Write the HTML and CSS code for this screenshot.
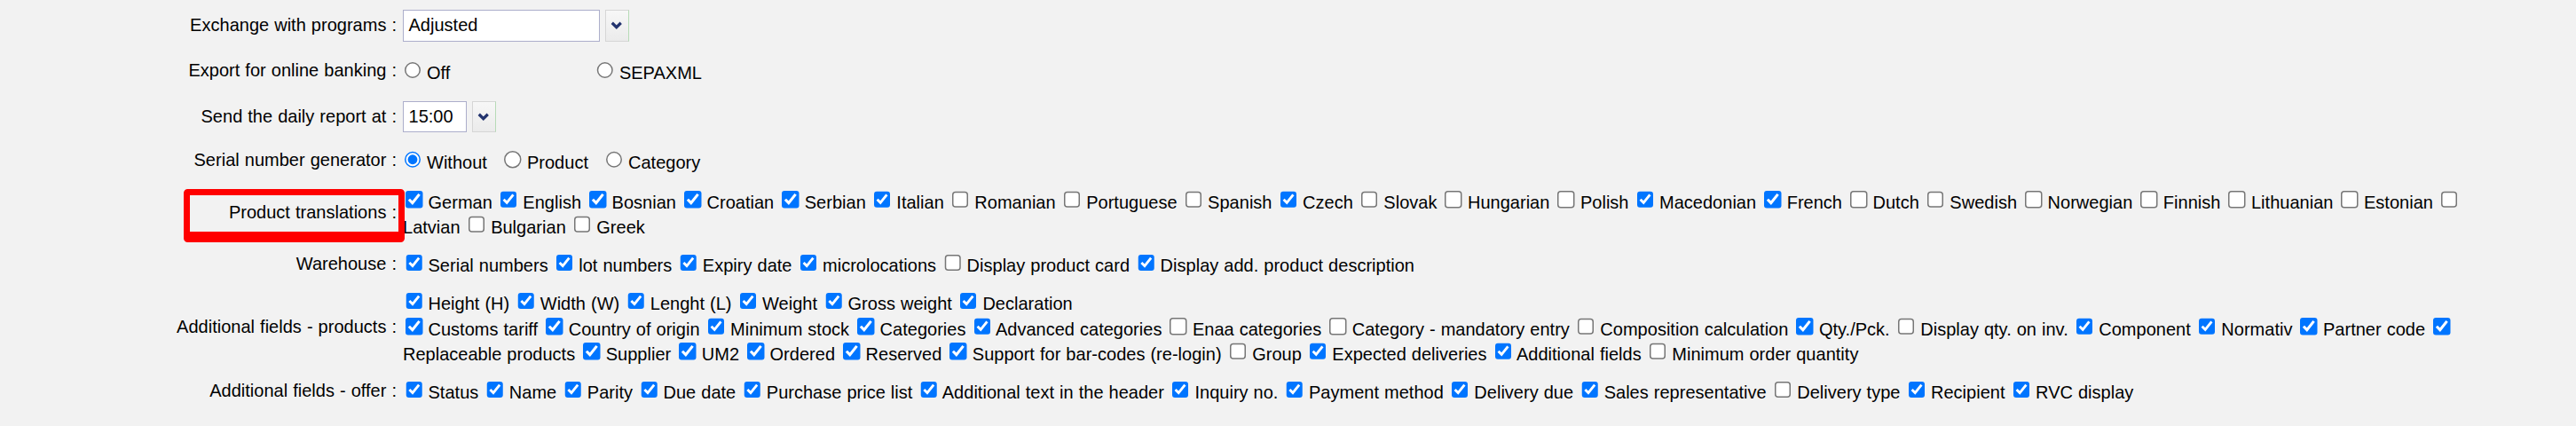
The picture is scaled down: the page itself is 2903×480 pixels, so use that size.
FILE: index.html
```html
<!DOCTYPE html>
<html>
<head>
<meta charset="utf-8">
<title>Settings</title>
<link rel="stylesheet" href="styles.css">
</head>
<body>
<div class="page">
  <table class="form">
    <tr class="r1">
      <td class="lbl">Exchange with programs :</td>
      <td class="val">
        <span class="combo"><span class="cbox wide">Adjusted</span><span class="cbtn"><svg class="chev" viewBox="0 0 10 7"><path d="M1.3 1.3 L5 5 L8.7 1.3"/></svg></span></span>
      </td>
    </tr>
    <tr class="r2">
      <td class="lbl">Export for online banking :</td>
      <td class="val"><label class="fixed"><input type="radio" name="bank"> Off</label> <label><input type="radio" name="bank"> SEPAXML</label></td>
    </tr>
    <tr class="r3">
      <td class="lbl">Send the daily report at :</td>
      <td class="val">
        <span class="combo"><span class="cbox narrow">15:00</span><span class="cbtn"><svg class="chev" viewBox="0 0 10 7"><path d="M1.3 1.3 L5 5 L8.7 1.3"/></svg></span></span>
      </td>
    </tr>
    <tr class="r4">
      <td class="lbl">Serial number generator :</td>
      <td class="val"><label class="ropt"><input type="radio" name="sn" checked> Without</label> <label class="ropt"><input type="radio" name="sn"> Product</label> <label><input type="radio" name="sn"> Category</label></td>
    </tr>
    <tr>
      <td class="lbl">Product translations :</td>
      <td class="val"><label><input type="checkbox" checked> German</label> <label><input type="checkbox" checked> English</label> <label><input type="checkbox" checked> Bosnian</label> <label><input type="checkbox" checked> Croatian</label> <label><input type="checkbox" checked> Serbian</label> <label><input type="checkbox" checked> Italian</label> <label><input type="checkbox"> Romanian</label> <label><input type="checkbox"> Portuguese</label> <label><input type="checkbox"> Spanish</label> <label><input type="checkbox" checked> Czech</label> <label><input type="checkbox"> Slovak</label> <label><input type="checkbox"> Hungarian</label> <label><input type="checkbox"> Polish</label> <label><input type="checkbox" checked> Macedonian</label> <label><input type="checkbox" checked> French</label> <label><input type="checkbox"> Dutch</label> <label><input type="checkbox"> Swedish</label> <label><input type="checkbox"> Norwegian</label> <label><input type="checkbox"> Finnish</label> <label><input type="checkbox"> Lithuanian</label> <label><input type="checkbox"> Estonian</label> <label><input type="checkbox"> Latvian</label> <label><input type="checkbox"> Bulgarian</label> <label><input type="checkbox"> Greek</label></td>
    </tr>
    <tr>
      <td class="lbl">Warehouse :</td>
      <td class="val"><label><input type="checkbox" checked> Serial numbers</label> <label><input type="checkbox" checked> lot numbers</label> <label><input type="checkbox" checked> Expiry date</label> <label><input type="checkbox" checked> microlocations</label> <label><input type="checkbox"> Display product card</label> <label><input type="checkbox" checked> Display add. product description</label></td>
    </tr>
    <tr>
      <td class="lbl">Additional fields - products :</td>
      <td class="val"><label><input type="checkbox" checked> Height (H)</label> <label><input type="checkbox" checked> Width (W)</label> <label><input type="checkbox" checked> Lenght (L)</label> <label><input type="checkbox" checked> Weight</label> <label><input type="checkbox" checked> Gross weight</label> <label><input type="checkbox" checked> Declaration</label><br><label><input type="checkbox" checked> Customs tariff</label> <label><input type="checkbox" checked> Country of origin</label> <label><input type="checkbox" checked> Minimum stock</label> <label><input type="checkbox" checked> Categories</label> <label><input type="checkbox" checked> Advanced categories</label> <label><input type="checkbox"> Enaa categories</label> <label><input type="checkbox"> Category - mandatory entry</label> <label><input type="checkbox"> Composition calculation</label> <label><input type="checkbox" checked> Qty./Pck.</label> <label><input type="checkbox"> Display qty. on inv.</label> <label><input type="checkbox" checked> Component</label> <label><input type="checkbox" checked> Normativ</label> <label><input type="checkbox" checked> Partner code</label> <label><input type="checkbox" checked> Replaceable products</label> <label><input type="checkbox" checked> Supplier</label> <label><input type="checkbox" checked> UM2</label> <label><input type="checkbox" checked> Ordered</label> <label><input type="checkbox" checked> Reserved</label> <label><input type="checkbox" checked> Support for bar-codes (re-login)</label> <label><input type="checkbox"> Group</label> <label><input type="checkbox" checked> Expected deliveries</label> <label><input type="checkbox" checked> Additional fields</label> <label><input type="checkbox"> Minimum order quantity</label></td>
    </tr>
    <tr>
      <td class="lbl">Additional fields - offer :</td>
      <td class="val"><label><input type="checkbox" checked> Status</label> <label><input type="checkbox" checked> Name</label> <label><input type="checkbox" checked> Parity</label> <label><input type="checkbox" checked> Due date</label> <label><input type="checkbox" checked> Purchase price list</label> <label><input type="checkbox" checked> Additional text in the header</label> <label><input type="checkbox" checked> Inquiry no.</label> <label><input type="checkbox" checked> Payment method</label> <label><input type="checkbox" checked> Delivery due</label> <label><input type="checkbox" checked> Sales representative</label> <label><input type="checkbox"> Delivery type</label> <label><input type="checkbox" checked> Recipient</label> <label><input type="checkbox" checked> RVC display</label></td>
    </tr>
  </table>
  <div class="highlight"></div>
</div>
</body>
</html>
```
FILE: styles.css
```css
html, body {
  margin: 0;
  padding: 0;
  background: #f2f2f2;
}
body {
  font-family: "Liberation Sans", Arial, sans-serif;
  font-size: 13.333px;
  color: #000;
  overflow: hidden;
  word-spacing: 0.29px;
  letter-spacing: 0.015px;
}
.page {
  zoom: 1.5;
  position: relative;
  padding-top: 2.33px;
  width: 1935px;
}
.form {
  border-collapse: separate;
  border-spacing: 0;
}
.form td {
  padding: 5px 0;
  vertical-align: middle;
}
.form td.lbl {
  width: 298px;
  text-align: right;
  white-space: nowrap;
}
.form td.val {
  width: 1570px;
  padding-left: 4.67px;
}
.r1 { height: 34px; }
.r2 { height: 34px; }
.r3 { height: 34.33px; }
.r4 { height: 31.33px; }

input[type="checkbox"] {
  margin: 2.5px 0 0 2px;
}
input[type="radio"] {
  margin: 3px 0 0 1px;
}
.fixed {
  display: inline-block;
  width: 140.6px;
}
.ropt {
  margin-right: 8px;
}

.combo {
  display: inline-flex;
  gap: 3.7px;
  vertical-align: top;
}
.cbox {
  box-sizing: border-box;
  background: #fff;
  border: 1px solid #acaecb;
  padding-left: 3.67px;
  line-height: 22px;
}
.cbox.wide {
  width: 148px;
  height: 24px;
}
.cbox.narrow {
  width: 48px;
  height: 23.33px;
  line-height: 21.33px;
}
.cbtn {
  box-sizing: border-box;
  width: 18px;
  height: 24px;
  display: flex;
  align-items: center;
  justify-content: center;
  border: 1px solid #d6d6d6;
  border-right-color: #b7dbb7;
  background: linear-gradient(#f7f7f7, #ebebeb);
}
.r3 .cbtn {
  height: 23.33px;
}
.chev {
  width: 9px;
  height: 6.3px;
}
.chev path {
  fill: none;
  stroke: #22336e;
  stroke-width: 2.4;
}

.highlight {
  position: absolute;
  left: 138px;
  top: 142px;
  width: 166px;
  height: 40px;
  box-sizing: border-box;
  border: 5.33px solid #ff0000;
  border-bottom-width: 8px;
  border-radius: 3px;
}
```
